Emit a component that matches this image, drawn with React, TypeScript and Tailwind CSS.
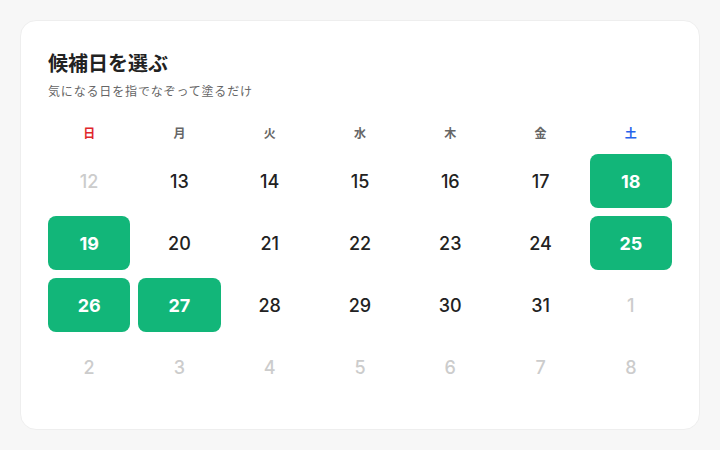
import React from 'react';

type Day = { n: number; muted?: boolean; picked?: boolean };

const weekdays = [
  { label: '日', cls: 'text-[#e0262b]' },
  { label: '月', cls: 'text-[#666666]' },
  { label: '火', cls: 'text-[#666666]' },
  { label: '水', cls: 'text-[#666666]' },
  { label: '木', cls: 'text-[#666666]' },
  { label: '金', cls: 'text-[#666666]' },
  { label: '土', cls: 'text-[#2563eb]' },
];

const picked = [18, 19, 25, 26, 27];

const days: Day[] = [
  { n: 12, muted: true },
  ...Array.from({ length: 19 }, (_, i) => ({ n: 13 + i, picked: picked.includes(13 + i) })),
  ...[1, 2, 3, 4, 5, 6, 7, 8].map(n => ({ n, muted: true })),
];

export default function App() {
  return (
    <div
      className="w-[720px] h-[450px] bg-[#f7f7f7] p-5"
      style={{ fontFamily: '"Noto Sans CJK JP", "Noto Sans", sans-serif' }}
    >
      <div className="h-[410px] rounded-2xl bg-white border border-[#eeeeee] px-[27px] pt-[27px]">
        {/* Heading */}
        <h1 className="text-[20px] leading-[30px] font-bold text-[#222222]">候補日を選ぶ</h1>
        <p className="mt-[4px] text-[12px] leading-[18px] tracking-[0.07em] text-[#666666]">気になる日を指でなぞって塗るだけ</p>

        {/* Weekday labels */}
        <div className="mt-[22px] grid grid-cols-7 gap-x-2">
          {weekdays.map(w => (
            <div key={w.label} className={`h-[22px] flex items-center justify-center text-[12px] font-bold ${w.cls}`}>
              {w.label}
            </div>
          ))}
        </div>

        {/* Days */}
        <div className="mt-[10px] grid grid-cols-7 gap-2 font-['Inter',sans-serif]">
          {days.map((d, i) => (
            <div
              key={i}
              className={
                d.picked
                  ? 'h-[54px] rounded-lg bg-[#12b679] flex items-center justify-center text-[18px] font-bold text-white'
                  : d.muted
                  ? 'h-[54px] flex items-center justify-center text-[18px] font-medium text-[#cccccc]'
                  : 'h-[54px] flex items-center justify-center text-[18px] font-medium text-[#222222]'
              }
            >
              {d.n}
            </div>
          ))}
        </div>
      </div>
    </div>
  );
}
